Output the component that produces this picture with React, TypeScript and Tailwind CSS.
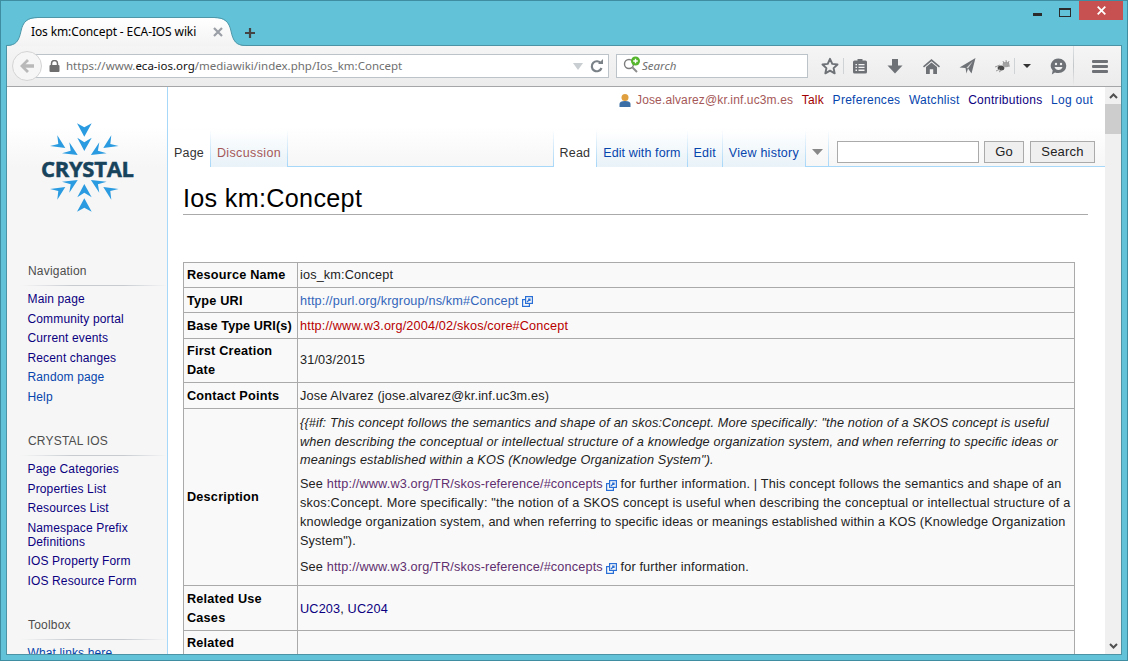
import React from "react";

const Sep = () => <div className="w-px self-stretch bg-[linear-gradient(rgba(167,215,249,0),#a7d7f9)]" />;

const Tab = ({ label, cls, selected }: { label: string; cls: string; selected?: boolean }) => (
  <a className={`h-[37px] -mb-px flex items-start pt-[14px] px-[6px] text-[12.5px] leading-[18px] whitespace-nowrap ${cls} ${selected ? "bg-white" : "bg-[linear-gradient(#ffffff,#e8f2f8)]"}`}>
    {label}
  </a>
);

const Ext = () => (
  <svg width="11" height="11" viewBox="0 0 11 11" className="inline-block ml-[3px] mb-[-1px]" fill="none" stroke="#2a6fd6" strokeWidth="1.2">
    <rect x="0.6" y="3.6" width="6.8" height="6.8" />
    <rect x="3.6" y="0.6" width="6.8" height="6.8" fill="#f9f9f9" />
    <path d="M5 6L8 3M6 3H8V5" />
  </svg>
);

const Nav = ({ title, links, last }: { title: string; links: [string, string][]; last?: boolean }) => (
  <div className={last ? "" : "mb-[30.5px]"}>
    <div className="pl-[21px] h-[14px] leading-[14px] text-[12px] tracking-[0.2px] text-[#4d4d4d]">{title}</div>
    <div className="mt-[7px] ml-[14px] h-px bg-[linear-gradient(to_right,rgba(200,204,209,0),#c8ccd1_35%,#c8ccd1_70%,rgba(200,204,209,0))]" />
    <ul className="mt-[6px] pl-[20.5px]">
      {links.map(([t, c]) => (
        <li key={t} className={`mb-[5.5px] leading-[14px] text-[12px] tracking-[0.14px] ${c}`}>{t}</li>
      ))}
    </ul>
  </div>
);

const Flake = () => {
  const Top = () => (
    <g fill="#2a9be0">
      <path d="M77 123.3L84.3 127.3L91.7 123.3L84.3 136.7Z" />
      <path d="M77.3 137.7L84.3 142.3L91.7 137.7L84.3 151Z" />
      <path d="M57.3 135.3L65.3 148L50 146L58.3 144Z" />
      <path d="M69.3 142.3L77.7 155L62 153.3L70.7 150.7Z" />
      <path d="M111.3 135.3L103.3 148L118.6 146L110.3 144Z" />
      <path d="M99.3 142.3L90.9 155L106.6 153.3L97.9 150.7Z" />
    </g>
  );
  return (
    <svg width="100" height="100" viewBox="35 118 100 100" className="absolute left-[28px] top-[31px]">
      <Top />
      <g transform="translate(0 335) scale(1 -1)">
        <Top />
      </g>
    </svg>
  );
};

const Th = ({ children, nudge }: { children: React.ReactNode; nudge?: string }) => (
  <th className={`border border-[#aaaaaa] bg-[#f9f9f9] text-left align-middle pl-[3px] pr-[3px] font-bold text-[12.7px] leading-[19px] tracking-[0.2px] text-black ${nudge ?? ""}`}>{children}</th>
);
const Td = ({ children, nudge }: { children?: React.ReactNode; nudge?: string }) => (
  <td className={`border border-[#aaaaaa] bg-[#f9f9f9] align-middle pl-[2px] pr-[2px] text-[12.7px] leading-[19px] whitespace-nowrap tracking-[0.15px] text-[#222] ${nudge ?? ""}`}>{children}</td>
);

const visited = "text-[#5f2f6f]";

export default function App() {
  return (
    <div className="w-[1128px] h-[661px] overflow-hidden flex flex-col border border-[#3f8da0] bg-[#62c3d8] px-[5px] pb-[5px] font-['Liberation_Sans',Arial,sans-serif]">
      {/* title bar */}
      <div className="h-[44px] shrink-0 flex items-start relative z-10">
        <div className="relative mt-[16px] w-[240px] h-[29px] pl-[25px] flex items-center text-[12px] text-black font-['Noto_Sans',sans-serif]">
          <svg width="240" height="29" viewBox="0 0 240 29" className="absolute inset-0">
            <defs>
              <linearGradient id="tabg" x1="0" y1="0" x2="0" y2="1">
                <stop offset="0" stopColor="#ffffff" />
                <stop offset="1" stopColor="#f3f3f3" />
              </linearGradient>
            </defs>
            <path d="M0 29C10 29 13 24 15 14C17 5 21 1 32 1H208C219 1 223 5 225 14C227 24 230 29 240 29Z" fill="url(#tabg)" />
            <path d="M0 28.5C10 28.5 13 24 15 14C17 5 21 .5 32 .5H208C219 .5 223 5 225 14C227 24 230 28.5 240 28.5" fill="none" stroke="#4e97a9" />
          </svg>
          <span className="relative tracking-[-0.12px] whitespace-nowrap">Ios km:Concept - ECA-IOS wiki</span>
          <svg width="10" height="10" viewBox="0 0 10 10" className="absolute left-[207px] top-[10px]" stroke="#9a9ea6" strokeWidth="2.2">
            <path d="M1 1L9 9M9 1L1 9" />
          </svg>
        </div>
        <svg width="12" height="12" viewBox="0 0 12 12" className="ml-[-2px] mt-[26px]" stroke="#444" strokeWidth="2.2">
          <path d="M6 1V11M1 6H11" />
        </svg>
        <div className="ml-auto flex items-start mr-[-1px]">
          <div className="w-[9px] h-[3px] bg-[#2b2b2b] mt-[12px]" />
          <div className="ml-[17px] mt-[7px] w-[12px] h-[9px] border border-[#2b2b2b] border-t-[2px]" />
          <div className="ml-[8px] w-[44px] h-[19px] bg-[#c75050] flex items-center justify-center">
            <svg width="9" height="9" viewBox="0 0 9 9" stroke="#fff" strokeWidth="1.8">
              <path d="M.7 .7L8.3 8.3M8.3 .7L.7 8.3" />
            </svg>
          </div>
        </div>
      </div>

      {/* browser frame */}
      <div className="flex-1 min-h-0 flex flex-col border border-[#4c93a5] overflow-hidden">
        {/* toolbar */}
        <div className="h-[41px] shrink-0 flex items-center border-b border-[#a4a6a8] bg-[linear-gradient(#f5f5f5,#ececec)]">
          <div className="relative z-10 ml-[5px] w-[30px] h-[30px] rounded-full border border-[#d4d4d4] bg-[#f6f6f6] flex items-center justify-center">
            <svg width="16" height="14" viewBox="0 0 16 14" fill="#b9b9b9">
              <path d="M8 0L10 2L6.5 5.2H15V8.8H6.5L10 12L8 14L1 7Z" />
            </svg>
          </div>
          <div className="ml-[-6px] w-[573px] h-[24px] bg-white border border-[#bcc3c9] flex items-center pl-[12px] pr-[4px] text-[11.5px] text-[#6f6f6f] font-['Noto_Sans',sans-serif]">
            <svg width="11" height="12" viewBox="0 0 11 12" className="shrink-0">
              <path d="M2.5 5V3.5a3 3 0 0 1 6 0V5" fill="none" stroke="#6e6e6e" strokeWidth="1.5" />
              <rect x="0.5" y="5" width="10" height="7" rx="1" fill="#6e6e6e" />
            </svg>
            <span className="ml-[6px] whitespace-nowrap">https://www.<span className="text-[#111]">eca-ios.org</span>/mediawiki/index.php/Ios_km:Concept</span>
            <svg width="10" height="7" viewBox="0 0 10 7" className="ml-auto" fill="#c9ced2"><path d="M0 0H10L5 7Z" /></svg>
            <svg width="14" height="14" viewBox="0 0 14 14" className="ml-[7px]" fill="none">
              <path d="M11 4.5A5 5 0 1 0 11.5 9" stroke="#7a8288" strokeWidth="2.2" />
              <path d="M8 5H13V0Z" fill="#7a8288" />
            </svg>
          </div>
          <div className="ml-[7px] w-[192px] h-[24px] bg-white border border-[#bcc3c9] flex items-center pl-[6px] text-[11.5px] italic text-[#6f6f6f] font-['Noto_Sans',sans-serif]">
            <svg width="20" height="18" viewBox="0 0 20 18" className="shrink-0 mt-[-3px]">
              <circle cx="6" cy="8" r="4.5" fill="none" stroke="#7d7d7d" strokeWidth="1.4" />
              <path d="M9.5 11.5L14 16" stroke="#8d8d8d" strokeWidth="2" />
              <circle cx="12.5" cy="5" r="4.5" fill="#55b52b" />
              <path d="M12.5 2.7V7.3M10.2 5H14.8" stroke="#fff" strokeWidth="1.4" />
            </svg>
            <span className="ml-[-1px]">Search</span>
          </div>
          {/* icons */}
          <div className="ml-[12px] w-[20px] flex justify-center">
            <svg width="18" height="18" viewBox="0 0 24 24" fill="none" stroke="#6e7277" strokeWidth="2.6" strokeLinejoin="round">
              <path d="M12 2.5L15 9.2L22 10L16.8 14.8L18.2 21.8L12 18.2L5.8 21.8L7.2 14.8L2 10L9 9.2Z" />
            </svg>
          </div>
          <div className="ml-[3px] w-px h-[16px] bg-[#cfd3d6]" />
          <div className="ml-[6px] w-[20px] flex justify-center">
            <svg width="16" height="16" viewBox="0 0 16 16" fill="#6e7277">
              <path d="M2.5 2.5H5.5V1H10.5V2.5H13.5Q15 2.5 15 4V14Q15 15.5 13.5 15.5H2.5Q1 15.5 1 14V4Q1 2.5 2.5 2.5Z" />
              <path d="M3.5 6H5V7.3H3.5ZM6.5 6H12.5V7.3H6.5ZM3.5 8.8H5V10.1H3.5ZM6.5 8.8H12.5V10.1H6.5ZM3.5 11.6H5V12.9H3.5ZM6.5 11.6H12.5V12.9H6.5Z" fill="#f2f2f2" />
            </svg>
          </div>
          <div className="ml-[15px] w-[20px] flex justify-center">
            <svg width="16" height="15" viewBox="0 0 16 15" fill="#6e7277"><path d="M5 0H11V6.5H15.5L8 14.5L.5 6.5H5Z" /></svg>
          </div>
          <div className="ml-[16px] w-[20px] flex justify-center">
            <svg width="17" height="15" viewBox="0 0 17 15" fill="#6e7277">
              <path d="M8.5 0L17 7.2L16 8.4L8.5 2.2L1 8.4L0 7.2Z" />
              <path d="M8.5 3.6L14 8V15H10.2V10.2H6.8V15H3V8Z" />
            </svg>
          </div>
          <div className="ml-[16px] w-[20px] flex justify-center">
            <svg width="17" height="16" viewBox="0 0 17 16" fill="#6e7277">
              <path d="M16.5 0L12.5 15.5L9 10.5L7.5 15.5L6.5 10L.5 9.5Z" />
              <path d="M14 3L7.5 9.8L9 10.5Z" fill="#d8d8d8" />
            </svg>
          </div>
          <div className="ml-[16px] w-[20px] flex justify-center">
            <svg width="18" height="14" viewBox="0 0 18 14" fill="none">
              <ellipse cx="7" cy="9" rx="3.4" ry="2.5" fill="#4a4a4a" />
              <ellipse cx="12" cy="5.5" rx="3.4" ry="2.8" fill="#a2a2a2" />
              <path d="M1 8L6 6M2 12L6 10M5 13L8 11M9 2L10 5M12 1L12.5 4M15 2L14 5M16 7L13 7" stroke="#9a9a9a" strokeWidth="1" />
            </svg>
          </div>
          <div className="ml-[1px] w-px h-[16px] bg-[#cfd3d6]" />
          <div className="ml-[7px] w-[10px] flex justify-center">
            <svg width="8" height="4" viewBox="0 0 8 4" fill="#333"><path d="M0 0H8L4 4Z" /></svg>
          </div>
          <div className="ml-[16px] w-[20px] flex justify-center">
            <svg width="17" height="17" viewBox="0 0 17 17">
              <path d="M8.5 0.5A7.8 7.3 0 0 1 8.5 15.1Q6.5 15.1 5 14.5L1.8 16.5L2.7 12.6A7.8 7.3 0 0 1 8.5 0.5Z" fill="#6e7277" />
              <circle cx="6" cy="6" r="1.2" fill="#f2f2f2" />
              <circle cx="11" cy="6" r="1.2" fill="#f2f2f2" />
              <path d="M4.5 9H12.5Q11.5 12 8.5 12Q5.5 12 4.5 9Z" fill="#f2f2f2" />
            </svg>
          </div>
          <div className="ml-[5px] w-px self-stretch bg-[linear-gradient(#dfe1e3,#c4c7ca_50%,#ececec)]" />
          <div className="ml-[16px] w-[20px] flex justify-center">
            <svg width="16" height="13" viewBox="0 0 16 13" fill="#6e7277">
              <rect width="16" height="3" rx="1" />
              <rect y="5" width="16" height="3" rx="1" />
              <rect y="10" width="16" height="3" rx="1" />
            </svg>
          </div>
        </div>

        {/* page */}
        <div className="flex-1 min-h-0 flex bg-white overflow-hidden">
          {/* sidebar */}
          <aside className="relative w-[161px] shrink-0 border-r border-[#a7d7f9] bg-[#f6f6f6] overflow-hidden">
            <div className="relative h-[177px] bg-[linear-gradient(#ffffff_40px,#f6f6f6_80px)]">
              <Flake />
              <div className="absolute left-[34px] top-[70px] text-[22px] leading-[22px] font-bold text-[#17435c] font-['Open_Sans',sans-serif] tracking-[-0.3px]" style={{ WebkitTextStroke: "0.5px #17435c" }}>CRYSTAL</div>
            </div>
            <Nav
              title="Navigation"
              links={[
                ["Main page", "text-[#0b0080]"],
                ["Community portal", "text-[#0b0080]"],
                ["Current events", "text-[#0b0080]"],
                ["Recent changes", "text-[#0b0080]"],
                ["Random page", "text-[#0645ad]"],
                ["Help", "text-[#0645ad]"],
              ]}
            />
            <Nav
              title="CRYSTAL IOS"
              links={[
                ["Page Categories", "text-[#0b0080]"],
                ["Properties List", "text-[#0b0080]"],
                ["Resources List", "text-[#0b0080]"],
                ["Namespace Prefix Definitions", "text-[#0b0080] pr-[20px]"],
                ["IOS Property Form", "text-[#0b0080]"],
                ["IOS Resource Form", "text-[#0b0080]"],
              ]}
            />
            <Nav title="Toolbox" links={[["What links here", "text-[#0645ad]"]]} last />
          </aside>

          {/* main */}
          <main className="flex-1 min-w-0 flex flex-col overflow-hidden">
            <header className="h-[80px] shrink-0 flex flex-col bg-[linear-gradient(#ffffff_40px,#f6f6f6_80px)]">
              <div className="flex justify-end items-center gap-[8.5px] pr-[12px] pt-[1px] h-[24px] text-[12px] tracking-[0.28px] whitespace-nowrap">
                <svg width="12" height="14" viewBox="0 0 12 14" className="mr-[-3.5px]">
                  <path d="M0.5 14V11Q0.5 8 6 8Q11.5 8 11.5 11V14Z" fill="#3a6ea5" />
                  <circle cx="6" cy="4.5" r="3.5" fill="#e0a040" />
                </svg>
                <span className="text-[#a55858] tracking-[0.13px]">Jose.alvarez@kr.inf.uc3m.es</span>
                <span className="text-[#a00000]">Talk</span>
                <span className="text-[#0645ad]">Preferences</span>
                <span className="text-[#0645ad]">Watchlist</span>
                <span className="text-[#0b0080]">Contributions</span>
                <span className="text-[#0645ad]">Log out</span>
              </div>
              <div className="mt-auto flex items-stretch h-[37px] border-b border-[#a7d7f9]">
                <Tab label="Page" cls="text-[#333] tracking-[0.17px]" selected />
                <Sep />
                <Tab label="Discussion" cls="text-[#a55858] tracking-[0.38px]" />
                <Sep />
                <div className="flex-1" />
                <Sep />
                <Tab label="Read" cls="text-[#333] tracking-[0.17px]" selected />
                <Sep />
                <Tab label="Edit with form" cls="text-[#0645ad] tracking-[0.12px]" />
                <Sep />
                <Tab label="Edit" cls="text-[#0645ad] tracking-[0.17px]" />
                <Sep />
                <Tab label="View history" cls="text-[#0645ad] tracking-[0.25px]" />
                <Sep />
                <div className="w-[22px] flex justify-center pt-[19px]">
                  <svg width="11" height="6" viewBox="0 0 11 6" fill="#888"><path d="M0 0H11L5.5 6Z" /></svg>
                </div>
                <Sep />
                <div className="flex items-start gap-[5px] pl-[8px] pr-[10px] pt-[11px]">
                  <div className="w-[142px] h-[22px] bg-white border border-[#aaaaaa]" />
                  <div className="w-[40px] h-[22px] bg-[#efefef] border border-[#aaaaaa] flex items-center justify-center text-[13px] tracking-[0.2px] text-[#222]">Go</div>
                  <div className="ml-[1px] w-[65px] h-[22px] bg-[#efefef] border border-[#aaaaaa] flex items-center justify-center text-[13px] tracking-[0.2px] text-[#222]">Search</div>
                </div>
              </div>
            </header>

            <div className="pl-[15px] pr-[17px] min-h-0">
              <h1 className="h-[48px] border-b border-[#aaaaaa] pt-[15px] text-[25.2px] leading-[32px] tracking-[0.3px] text-black whitespace-nowrap">Ios km:Concept</h1>
              <table className="mt-[47px] w-[892px] table-fixed border-collapse">
                <colgroup>
                  <col className="w-[114px]" />
                  <col />
                </colgroup>
                <tbody>
                  <tr className="h-[25px]">
                    <Th>Resource Name</Th>
                    <Td>ios_km:Concept</Td>
                  </tr>
                  <tr className="h-[25px]">
                    <Th nudge="pt-[2px]">Type URI</Th>
                    <Td nudge="pt-[2px]">
                      <span className="text-[#3366bb]">http://purl.org/krgroup/ns/km#Concept</span>
                      <Ext />
                    </Td>
                  </tr>
                  <tr className="h-[26px]">
                    <Th nudge="pt-[1px]"><span className="whitespace-nowrap tracking-[0.08px]">Base Type URI(s)</span></Th>
                    <Td nudge="pt-[1px]"><span className="text-[#b80000]">http://www.w3.org/2004/02/skos/core#Concept</span></Td>
                  </tr>
                  <tr className="h-[44px]">
                    <Th>First Creation Date</Th>
                    <Td>31/03/2015</Td>
                  </tr>
                  <tr className="h-[26px]">
                    <Th nudge="pt-[1px]">Contact Points</Th>
                    <Td nudge="pt-[1px]">Jose Alvarez (jose.alvarez@kr.inf.uc3m.es)</Td>
                  </tr>
                  <tr className="h-[177px]">
                    <Th>Description</Th>
                    <Td>
                      <p className="italic leading-[18.7px]">
                        {"{{#if: This concept follows the semantics and shape of an skos:Concept. More specifically: \"the notion of a SKOS concept is useful"}
                        <br />
                        <span className="tracking-[0.17px]">when describing the conceptual or intellectual structure of a knowledge organization system, and when referring to specific ideas or</span>
                        <br />
                        meanings established within a KOS (Knowledge Organization System").
                      </p>
                      <p className="mt-[5px]">
                        See <span className={visited}>http://www.w3.org/TR/skos-reference/#concepts</span>
                        <Ext /> <span className="tracking-[0.2px]">for further information. | This concept follows the semantics and shape of an</span>
                        <br />
                        <span className="tracking-[0.2px]">skos:Concept. More specifically: "the notion of a SKOS concept is useful when describing the conceptual or intellectual structure of a</span>
                        <br />
                        <span className="tracking-[0.14px]">knowledge organization system, and when referring to specific ideas or meanings established within a KOS (Knowledge Organization</span>
                        <br />
                        System").
                      </p>
                      <p className="mt-[7px] mb-[3px]">
                        See <span className={visited}>http://www.w3.org/TR/skos-reference/#concepts</span>
                        <Ext /> for further information.
                      </p>
                    </Td>
                  </tr>
                  <tr className="h-[45px]">
                    <Th nudge="pt-[1px]">Related Use Cases</Th>
                    <Td nudge="pt-[2px]">
                      <span className="text-[#0b0080]">UC203</span>, <span className="text-[#0b0080]">UC204</span>
                    </Td>
                  </tr>
                  <tr className="h-[44px]">
                    <Th>Related Ontologies</Th>
                    <Td />
                  </tr>
                </tbody>
              </table>
            </div>
          </main>

          {/* scrollbar */}
          <div className="w-[16px] shrink-0 bg-[#f0f0f0] flex flex-col items-center">
            <svg width="9" height="6" viewBox="0 0 9 6" className="mt-[6px]" fill="none" stroke="#505050" strokeWidth="2"><path d="M1 5L4.5 1.5L8 5" /></svg>
            <div className="mt-[5px] w-full h-[30px] bg-[#cdcdcd]" />
            <svg width="9" height="6" viewBox="0 0 9 6" className="mt-auto mb-[5px]" fill="none" stroke="#505050" strokeWidth="2"><path d="M1 1L4.5 4.5L8 1" /></svg>
          </div>
        </div>
      </div>
    </div>
  );
}
